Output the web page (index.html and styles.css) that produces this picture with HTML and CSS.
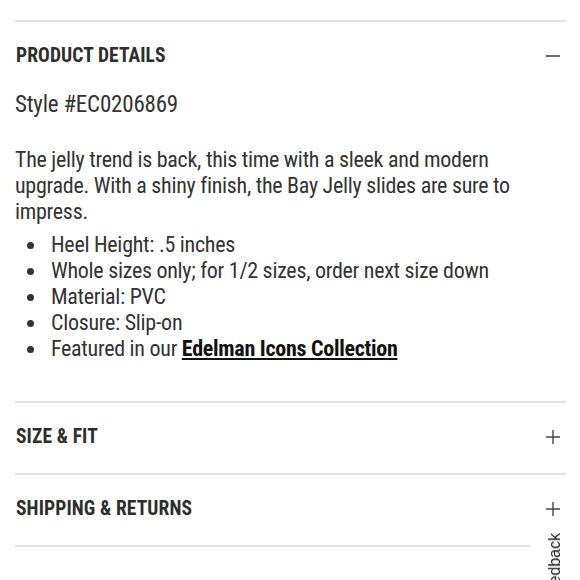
FILE: index.html
```html
<!DOCTYPE html>
<html lang="en">
<head>
<meta charset="utf-8">
<title>Product Details</title>
<link rel="stylesheet" href="styles.css">
</head>
<body>
<main class="page">
  <section class="acc">
    <div class="acc-head">
      <h2 class="acc-title">PRODUCT DETAILS</h2>
      <svg class="acc-icon" width="16" height="16" viewBox="0 0 16 16" aria-hidden="true"><path d="M1 8h14" stroke="#444" stroke-width="1.6" fill="none"/></svg>
    </div>
    <div class="acc-body">
      <p class="style-no">Style #EC0206869</p>
      <p class="desc">The jelly trend is back, this time with a sleek and modern upgrade. With a shiny finish, the Bay Jelly slides are sure to impress.</p>
      <ul class="bullets">
        <li>Heel Height: .5 inches</li>
        <li>Whole sizes only; for 1/2 sizes, order next size down</li>
        <li>Material: PVC</li>
        <li>Closure: Slip-on</li>
        <li><span>Featured in our <a class="link" href="#">Edelman Icons Collection</a></span></li>
      </ul>
    </div>
  </section>
  <section class="acc">
    <div class="acc-head">
      <h2 class="acc-title">SIZE &amp; FIT</h2>
      <svg class="acc-icon" width="16" height="16" viewBox="0 0 16 16" aria-hidden="true"><path d="M1 8h14M8 1v14" stroke="#444" stroke-width="1.4" fill="none"/></svg>
    </div>
  </section>
  <section class="acc">
    <div class="acc-head">
      <h2 class="acc-title">SHIPPING &amp; RETURNS</h2>
      <svg class="acc-icon" width="16" height="16" viewBox="0 0 16 16" aria-hidden="true"><path d="M1 8h14M8 1v14" stroke="#444" stroke-width="1.4" fill="none"/></svg>
    </div>
  </section>
  <div class="end-rule"></div>
</main>
<div class="feedback">Feedback</div>
</body>
</html>
```
FILE: styles.css
```css
html, body {
  margin: 0;
  padding: 0;
  background: #fff;
}
body {
  font-family: Roboto, "Liberation Sans", sans-serif;
  font-stretch: 75%;
  color: #333;
}
.page {
  padding: 20px 14px 0 15px;
}
.acc {
  border-top: 2px solid #e4e4e4;
}
.acc-head {
  height: 70px;
  display: flex;
  align-items: center;
  justify-content: space-between;
  padding-bottom: 2px;
  box-sizing: border-box;
}
.acc-title {
  margin: 0 0 0 1px;
  font-size: 19.5px;
  font-weight: 700;
  line-height: 20px;
  letter-spacing: 0.1px;
  color: #2e2e2e;
}
.acc-icon {
  display: block;
  margin-right: 5px;
}
.acc-body {
  padding-bottom: 39px;
  font-size: 22px;
  line-height: 26px;
  letter-spacing: -0.28px;
}
.style-no {
  margin: 0;
  font-size: 23px;
  letter-spacing: -0.2px;
}
.desc {
  margin: 29px 0 0;
  max-width: 530px;
}
.bullets {
  list-style: none;
  margin: 7px 0 0;
  padding: 0;
}
.bullets li {
  display: flex;
}
.bullets li::before {
  content: "";
  flex: none;
  width: 7px;
  height: 7px;
  border-radius: 50%;
  background: #333;
  margin: 10px 17px 0 12px;
}
.link {
  color: #111;
  font-weight: 700;
  text-decoration: underline;
  text-underline-offset: 2px;
}
.end-rule {
  border-top: 2px solid #e4e4e4;
}
.feedback {
  position: fixed;
  right: 0;
  top: 522px;
  width: 18px;
  padding: 11px 16px;
  background: #fff;
  writing-mode: vertical-rl;
  transform: rotate(180deg);
  font-family: "Liberation Sans", Arial, sans-serif;
  font-stretch: normal;
  font-size: 16px;
  line-height: 18px;
  color: #222;
}
```
